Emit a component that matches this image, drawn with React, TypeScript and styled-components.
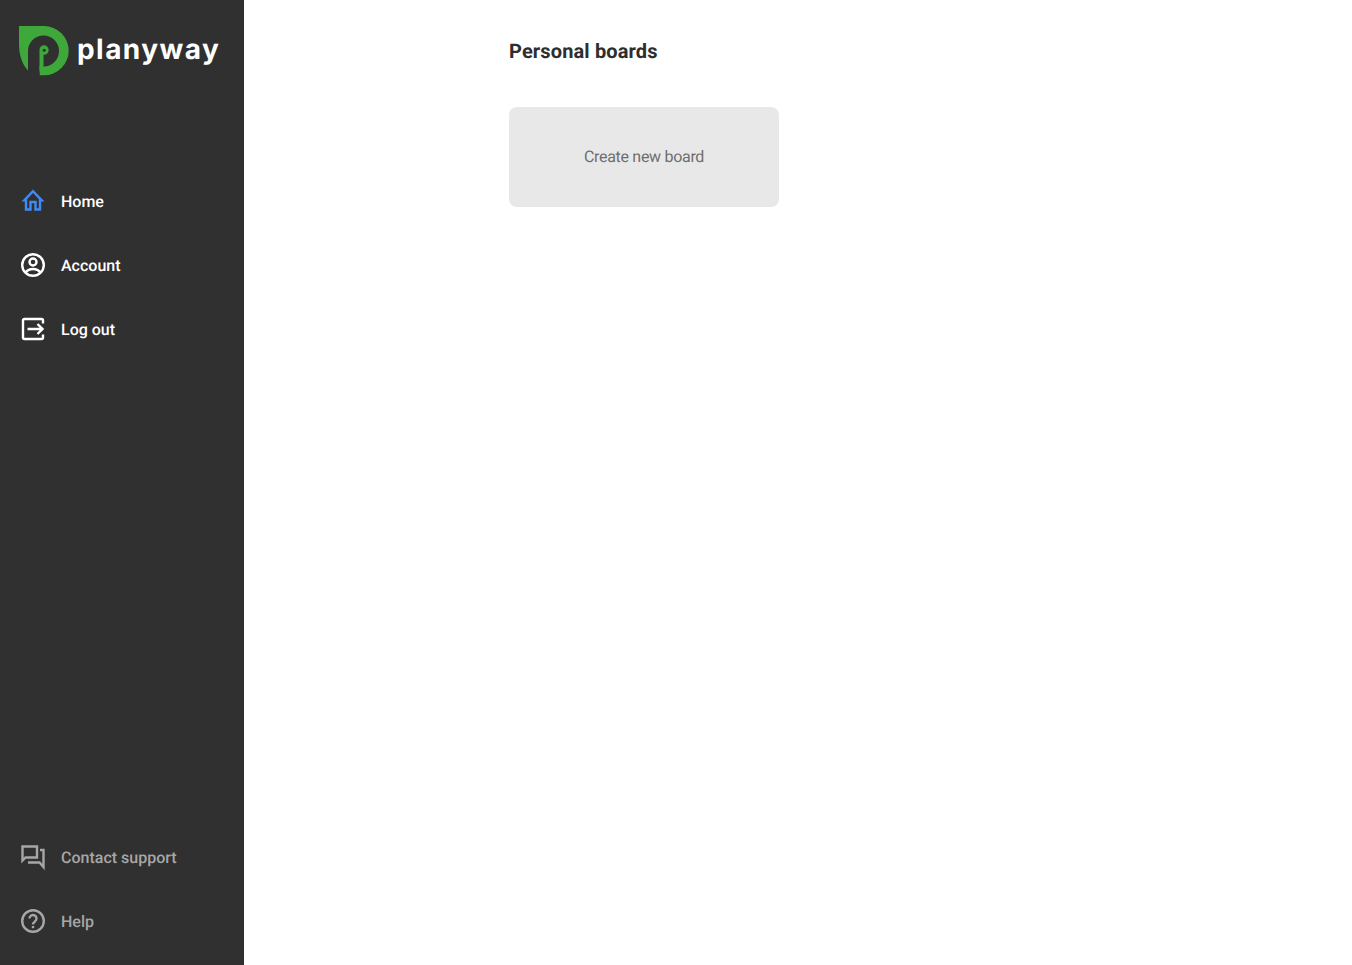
import React from "react";
import styled, { createGlobalStyle } from "styled-components";

const Global = createGlobalStyle`
  html, body { margin: 0; padding: 0; height: 100%; background: #fff; }
  #root { height: 100%; }
  * { box-sizing: border-box; }
  body { text-rendering: geometricPrecision; }
`;

const Page = styled.div`
  display: flex;
  height: 965px;
  font-family: Roboto, "Liberation Sans", sans-serif;
`;

const Sidebar = styled.aside`
  width: 244px;
  flex: none;
  background: #303030;
  display: flex;
  flex-direction: column;
  padding: 26px 0 12px;
`;

const Brand = styled.div`
  display: flex;
  align-items: center;
  height: 50px;
  padding-left: 19px;
  gap: 8px;
`;

const Wordmark = styled.span`
  font-family: Inter, sans-serif;
  font-weight: 700;
  font-size: 28px;
  line-height: 50px;
  color: #fff;
  letter-spacing: 1.45px;
  position: relative;
  top: -2px;
`;

const Nav = styled.nav`
  display: flex;
  flex-direction: column;
  margin-top: 93px;
`;

const BottomNav = styled(Nav)`
  margin-top: auto;
`;

const Item = styled.a<{ $muted?: boolean }>`
  display: flex;
  align-items: center;
  height: 64px;
  padding-left: 19px;
  gap: 14px;
  font-size: 16px;
  font-weight: 500;
  color: ${(p) => (p.$muted ? "#a6a6a6" : "#ffffff")};
`;

const IconBox = styled.svg<{ $color?: string }>`
  width: 28px;
  height: 28px;
  flex: none;
  fill: none;
  stroke: ${(p) => p.$color ?? "currentColor"};
  stroke-width: 2.4;
`;

const Main = styled.main`
  flex: 1;
  padding: 39px 0 0 265px;
`;

const Title = styled.h1`
  margin: 0;
  font-size: 20px;
  line-height: 24px;
  font-weight: 700;
  letter-spacing: 0.14px;
  color: #2e2e2e;
`;

const CreateCard = styled.button`
  display: flex;
  align-items: center;
  justify-content: center;
  width: 270px;
  height: 100px;
  margin-top: 44px;
  padding: 0 0 2px;
  border: 0;
  border-radius: 8px;
  background: #e8e8e8;
  color: #6e6e6e;
  font-family: inherit;
  font-size: 16px;
  font-weight: 400;
  letter-spacing: -0.3px;
  text-rendering: geometricPrecision;
`;

const Logo = () => (
  <svg width="50" height="50" viewBox="19 26 50 50">
    <path fill="#3fa83a" d="M19 26H44A24.500 24.500 0 0 1 44 75.300H39.500V72L28 70.500C22 64 19 55 19 44Z" />
    <path fill="#303030" d="M28 76V51A15.500 15.500 0 1 1 43.500 66.500H39.500V76Z" />
    <path fill="#3fa83a" d="M39.500 70V50A4.600 4.800 0 1 1 43.500 54.800V70Z" />
    <circle cx="44.200" cy="50.200" r="1.500" fill="#303030" />
  </svg>
);

export default function App() {
  return (
    <Page>
      <Global />
      <Sidebar>
        <Brand>
          <Logo />
          <Wordmark>planyway</Wordmark>
        </Brand>
        <Nav>
          <Item>
            <IconBox viewBox="0 0 28 28" $color="#3f8af7">
              <path d="M5.300 13.300L14 4.200L22.700 13.300H21V22.500H16.500V15H11.500V22.500H7V13.300Z" />
            </IconBox>
            Home
          </Item>
          <Item>
            <IconBox viewBox="0 0 28 28">
              <circle cx="14" cy="14" r="10.800" />
              <circle cx="14" cy="11" r="3.500" />
              <path d="M6.500 21.500c2-2.500 4.800-3.500 7.500-3.500s5.500 1 7.500 3.500" />
            </IconBox>
            Account
          </Item>
          <Item>
            <IconBox viewBox="0 0 28 28">
              <path d="M24 8.500V5.500A1.500 1.500 0 0 0 22.500 4H5.500A1.500 1.500 0 0 0 4 5.500v17A1.500 1.500 0 0 0 5.500 24h17a1.500 1.500 0 0 0 1.500-1.500V19.500" />
              <path d="M8.500 14H23.500M18.500 9l5 5-5 5" />
            </IconBox>
            Log out
          </Item>
        </Nav>
        <BottomNav>
          <Item $muted>
            <IconBox viewBox="0 0 28 28">
              <path d="M3.500 3.500H18V14.500H6.500L3.500 17.500Z" />
              <path d="M21 7H24.500V24L20.500 19.500H9" />
            </IconBox>
            Contact support
          </Item>
          <Item $muted>
            <IconBox viewBox="0 0 28 28">
              <circle cx="14" cy="14" r="10.800" />
              <path d="M10.500 11.500a3.500 3.500 0 1 1 5.600 2.800c-1.300 1-2.100 1.600-2.100 3.200" />
              <path d="M14 19v2.200" />
            </IconBox>
            Help
          </Item>
        </BottomNav>
      </Sidebar>
      <Main>
        <Title>Personal boards</Title>
        <CreateCard>Create new board</CreateCard>
      </Main>
    </Page>
  );
}
